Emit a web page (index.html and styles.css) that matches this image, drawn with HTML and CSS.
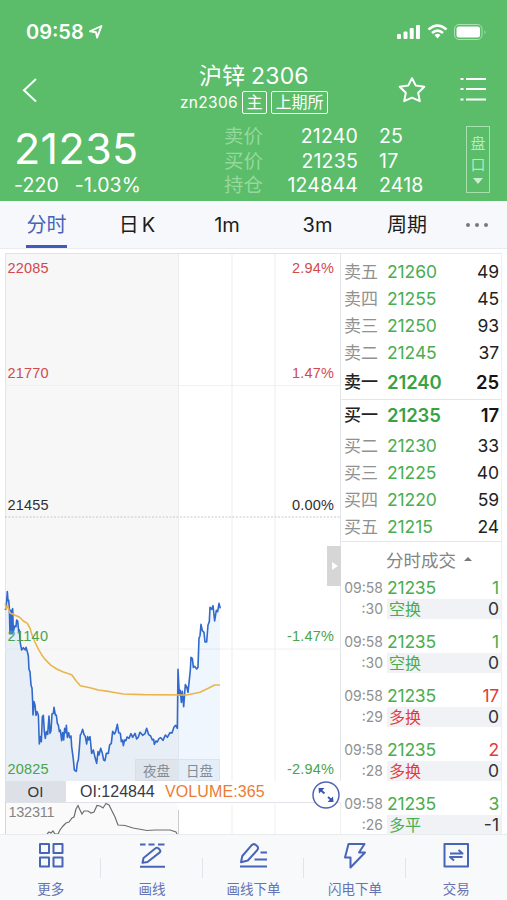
FILE: index.html
```html
<!DOCTYPE html>
<html lang="zh-CN">
<head>
    <meta charset="UTF-8">
    <meta name="viewport" content="width=device-width, initial-scale=1.0">
    <title>沪锌2306</title>
    <link rel="stylesheet" href="styles.css">
</head>
<body>
    <header class="quote-header">
        <div class="status-bar">
            <span class="clock">09:58</span>
            <svg class="location" width="14" height="14" viewBox="0 0 14 14"><path d="M1 6.400 12.400 1 8.100 12.600 7 7.200z" fill="none" stroke="#fff" stroke-width="1.900" stroke-linejoin="round"/></svg>
            <svg class="phone-icons" width="92" height="18" viewBox="0 0 92 18">
                <g fill="#fff">
                    <rect x="1" y="11" width="4" height="5" rx="1"/>
                    <rect x="7.500" y="8.500" width="4" height="7.500" rx="1"/>
                    <rect x="13.700" y="5" width="4" height="11" rx="1"/>
                    <rect x="20" y="2" width="4" height="14" rx="1"/>
                    <path d="M38.500 12 41.500 15.600 44.500 12Q41.500 9.700 38.500 12z"/>
                    <rect x="60.500" y="3.500" width="23.500" height="11" rx="2.500"/>
                    <path d="M88.500 7v4.500q2-2.200 0-4.500z" opacity=".5"/>
                </g>
                <path d="M32.500 6.400Q41.500-1.400 50.500 6.400M36 10Q41.500 5.200 47 10" fill="none" stroke="#fff" stroke-width="2.600"/>
                <rect x="58.500" y="1.500" width="27.500" height="15" rx="4.500" fill="none" stroke="#fff" opacity=".5"/>
            </svg>
        </div>

        <div class="title-bar">
            <svg class="back" width="16" height="26" viewBox="0 0 16 26"><path d="M14 2 2 13.200 14 24.500" fill="none" stroke="#fff" stroke-width="2"/></svg>
            <div class="contract">
                <div class="contract-name">沪锌<span>2306</span></div>
                <div class="contract-code"><span>zn2306</span><b class="tag">主</b><b class="tag">上期所</b></div>
            </div>
            <svg class="star" width="30" height="28" viewBox="0 0 30 28"><path d="M15 2.200 18.800 9.600 27.300 10.800 21.200 16.800 22.800 25.200 15 21.700 7.200 25.200 8.800 16.800 2.700 10.800 11.200 9.600z" fill="none" stroke="#fff" stroke-width="2" stroke-linejoin="round"/></svg>
            <svg class="list" width="28" height="26" viewBox="0 0 28 26"><path d="M7 3h20M7 13h20M7 23.500h20M1.500 3h3M1.500 13h3M1.500 23.500h3" stroke="#fff" stroke-width="2"/></svg>
        </div>

        <div class="quote">
            <div class="last">
                <div class="last-price">21235</div>
                <div class="change"><span>-220</span><span>-1.03%</span></div>
            </div>
            <div class="quote-table">
                <label>卖价</label><span>21240</span><em>25</em>
                <label>买价</label><span>21235</span><em>17</em>
                <label>持仓</label><span>124844</span><em>2418</em>
            </div>
            <div class="depth-button"><span>盘</span><span>口</span><i></i></div>
        </div>
    </header>

    <nav class="tabs">
        <a class="active">分时</a>
        <a>日<span class="k">K</span></a>
        <a>1m</a>
        <a>3m</a>
        <a>周期</a>
        <a class="dots"><i></i><i></i><i></i></a>
    </nav>

    <main class="content">
        <section class="chart-column">
            <svg class="chart" width="341" height="528" viewBox="0 253 341 528">
                <rect x="5" y="253" width="173" height="528" fill="#f7f7f7"/>
                <g stroke="#ededf0">
                    <path d="M5.500 253v528M340.500 253v528" stroke="#e2e6ea"/>
                    <path d="M178.500 253v528M232 253v528M275 253v528"/>
                    <path d="M5 253.500h336" stroke="#dfe3e8"/>
                    <path d="M5 385.500h336M5 649h336" stroke="#f0f0f2"/>
                    <path d="M5 517h336" stroke="#c8c8c8" stroke-dasharray="2 1.500"/>
                </g>
                <g class="axis">
                    <text x="7.500" y="273" textLength="41" class="up">22085</text>
                    <text x="7.500" y="378" textLength="41" class="up">21770</text>
                    <text x="7.500" y="510" textLength="41">21455</text>
                    <text x="292" y="273" textLength="42" class="up">2.94%</text>
                    <text x="292" y="378" textLength="42" class="up">1.47%</text>
                    <text x="292" y="510" textLength="42">0.00%</text>
                    <text x="287" y="641" textLength="47" class="down">-1.47%</text>
                    <text x="287" y="774" textLength="47" class="down">-2.94%</text>
                </g>
                <!-- price and average lines -->
                <g transform="translate(0 570) scale(.33333)" fill="none" stroke-linejoin="round">
                    <path fill="#2f86e8" fill-opacity=".08" d="M16 120 22 65 30 185 38 190 50 150 65 240 82 245 93 340 100 430 104 400 118 522 128 440 137 505 148 480 162 412 172 460 185 512 198 470 213 515 227 604 248 478 262 510 290 580 302 535 315 572 335 490 352 463 370 527 405 490 440 475 465 523 532 465 535 300 545 410 560 365 573 262 590 295 603 163 618 215 630 110 645 150 660 100V633H16z"/>
                    <path stroke="#3169cc" stroke-width="4.800" d="M16 120 19 105 22 65 24 92 26 90 28 115 30 192 33 120 36 192 38 116 40 185 44 168 48 170 50 150 53 153 56 185 58 180 61 220 65 240 70 233 76 240 78 232 82 245 85 258 87 298 90 305 93 345 96 355 98 395 99 435 102 395 105 405 108 436 111 425 115 435 118 522 121 500 124 515 127 440 130 436 133 485 136 505 139 485 143 493 147 438 150 490 153 482 156 432 160 430 162 412 166 435 169 435 172 460 175 465 178 485 181 480 185 512 188 488 191 510 194 475 198 488 199 466 202 502 206 488 209 503 213 498 215 530 220 568 223 600 229 604 232 578 235 570 238 535 241 495 244 490 248 478 252 493 256 500 260 522 263 500 266 510 270 500 275 550 280 540 285 562 290 580 294 545 297 555 302 535 307 550 311 570 315 572 319 550 325 550 329 525 334 520 338 484 343 492 347 485 352 463 356 488 361 490 364 515 368 510 370 527 374 510 378 512 381 501 387 505 393 491 398 502 405 490 410 507 415 501 420 487 428 496 435 491 440 475 446 494 452 498 457 510 461 508 463 523 468 513 472 516 477 506 482 503 489 511 496 495 502 502 510 488 516 489 522 471 527 466 532 475 534 298 538 375 541 361 544 397 547 364 551 410 556 344 560 350 564 367 568 330 571 300 573 262 577 265 580 292 584 289 590 297 594 292 597 205 600 197 603 163 607 182 612 187 615 216 620 216 624 165 628 155 630 112 635 118 639 107 644 153 649 121 653 125 657 100 661 115"/>
                    <path stroke="#eab54d" stroke-width="4.800" d="M16 100 18 116 23 108 30 129 45 136 58 141 70 153 82 160 90 175 97 198 106 219 116 239 125 254 136 269 153 286 170 297 190 306 215 314 228 332 241 347 270 353 295 360 330 365 370 372 430 374 560 375 600 367 625 355 644 345 660 345"/>
                </g>
                <g class="axis down">
                    <text x="7.500" y="641" textLength="40.500">21140</text>
                    <text x="7.500" y="774" textLength="41">20825</text>
                </g>
                <path d="M135.500 759.500h43v21h-43z" fill="#dfe5eb" stroke="#d7dee5"/>
                <path d="M178.500 759.500h41v21h-41z" fill="#e4eef8" stroke="#d9e4ef"/>
                <text x="143" y="775.500" class="session">夜盘</text>
                <text x="186" y="775.500" class="session">日盘</text>
            </svg>

            <div class="indicator">
                <span class="indicator-name">OI</span>
                <span class="oi">OI:124844</span>
                <span class="volume">VOLUME:365</span>
            </div>

            <svg class="chart" width="341" height="32" viewBox="0 802 341 32">
                <path d="M5 802h173v32H5z" fill="#fafafa"/>
                <path d="M5 802.500h336" stroke="#dfe3e8"/>
                <path d="M5.500 802v32" stroke="#cddbd3"/>
                <path d="M232 802v32M275 802v32M340.500 802v32" stroke="#efeff2"/>
                <path d="M178.500 810v24" stroke="#ccc"/>
                <text x="8.500" y="817" textLength="46" class="oi-max">132311</text>
                <path d="M47 834 49 832 51 833 53 831 55 834 58 834 60 830 63 826 66 823 69 822 72 818 74 817 76 809 78 805.500 80 810 82 814 84 811 88 811 91 813 94 812 97 805.500 100 806 103 808 106 803.500 109 805 112 811 115 817 118 825 125 825.500 133 828 147 830.500 155 830 170 830 176 832 177 834" fill="none" stroke="#6e6e6e" stroke-width="1.200"/>
            </svg>

            <div class="panel-handle"></div>
            <svg class="expand" width="28" height="28" viewBox="0 0 28 28">
                <circle cx="14" cy="14" r="13" fill="#fff" stroke="#5065b5" stroke-width="1.500"/>
                <path d="M12.500 12.500 8 8.500M16 16 20 19.500" fill="none" stroke="#3655b4" stroke-width="1.800"/>
                <path d="M6.500 7H12.500L7 12.500zM21.500 21H15.500L21 15.500z" fill="#3655b4"/>
            </svg>
        </section>

        <section class="side-panel">
            <div class="order-book asks">
                <div class="level"><label>卖五</label><span>21260</span><em>49</em></div>
                <div class="level"><label>卖四</label><span>21255</span><em>45</em></div>
                <div class="level"><label>卖三</label><span>21250</span><em>93</em></div>
                <div class="level"><label>卖二</label><span>21245</span><em>37</em></div>
                <div class="level best"><label>卖一</label><span>21240</span><em>25</em></div>
            </div>
            <div class="order-book bids">
                <div class="level best"><label>买一</label><span>21235</span><em>17</em></div>
                <div class="level"><label>买二</label><span>21230</span><em>33</em></div>
                <div class="level"><label>买三</label><span>21225</span><em>40</em></div>
                <div class="level"><label>买四</label><span>21220</span><em>59</em></div>
                <div class="level"><label>买五</label><span>21215</span><em>24</em></div>
            </div>
            <div class="trades-title">分时成交<i></i></div>
            <div class="trade">
                <time>09:58</time><div class="row green"><span>21235</span><em>1</em></div>
                <time>:30</time><div class="row kind green"><span>空换</span><em>0</em></div>
            </div>
            <div class="trade">
                <time>09:58</time><div class="row green"><span>21235</span><em>1</em></div>
                <time>:30</time><div class="row kind green"><span>空换</span><em>0</em></div>
            </div>
            <div class="trade">
                <time>09:58</time><div class="row green"><span>21235</span><em class="red">17</em></div>
                <time>:29</time><div class="row kind red"><span>多换</span><em>0</em></div>
            </div>
            <div class="trade">
                <time>09:58</time><div class="row green"><span>21235</span><em class="red">2</em></div>
                <time>:28</time><div class="row kind red"><span>多换</span><em>0</em></div>
            </div>
            <div class="trade">
                <time>09:58</time><div class="row green"><span>21235</span><em>3</em></div>
                <time>:26</time><div class="row kind green"><span>多平</span><em>-1</em></div>
            </div>
        </section>
    </main>

    <footer class="toolbar">
        <a>
            <svg width="28" height="28" viewBox="0 0 28 28"><path d="M3 2h9v9H3zM16.500 2h9v9h-9zM3 15.500h9v9H3zM16.500 15.500h9v9h-9z"/></svg>
            更多
        </a>
        <a>
            <svg width="28" height="28" viewBox="0 0 28 28"><path d="M2 2.500h5.500M10.500 2.500h6M20 2.500h6.500M2 24.800h25M4.500 20.800 5.500 16 17.500 6.300Q19 5.200 20.300 6.300L21.800 7.800Q23 9.200 21.500 10.600L9.500 20z"/></svg>
            画线
        </a>
        <a>
            <svg width="28" height="28" viewBox="0 0 28 28"><path d="M1 24.500h27M15.500 17.500H28M21.500 10.500H28M2 20.300 3.300 14 12.500 3.300Q14.500 1.300 16.500 2.700L18 4Q20 5.800 18.300 8L8.800 18.500z"/></svg>
            画线下单
        </a>
        <a>
            <svg width="28" height="28" viewBox="0 0 28 28"><path d="M7.500 2H23.500L18 10.500H24L9.500 25.500V15.500H4z"/></svg>
            闪电下单
        </a>
        <a>
            <svg width="28" height="28" viewBox="0 0 28 28"><path d="M2.500 2h23.500v22.500H2.500zM8 11.500H20.500L16.500 8M20.500 15H8L12 18.500"/></svg>
            交易
        </a>
    </footer>
</body>
</html>
```

FILE: styles.css
```css
* {
    box-sizing: border-box;
}
body {
    margin: 0;
    width: 507px;
    height: 900px;
    overflow: hidden;
    background: #fff;
    font-family: Inter, "Noto Sans CJK SC", sans-serif;
    color: #222;
}
em, i {
    font-style: normal;
}
svg {
    display: block;
    flex: none;
}
.quote-header {
    height: 201px;
    background: #5bbc6a;
    color: #fff;
}
.status-bar {
    height: 64px;
    padding: 22px 19px 0 26px;
    display: flex;
    align-items: flex-start;
}
.clock {
    font-size: 20px;
    line-height: 21px;
    font-weight: 600;
    letter-spacing: 0;
}
.location {
    margin: 3px 0 0 5px;
}
.phone-icons {
    margin: 1px 0 0 auto;
}
.title-bar {
    height: 60px;
    display: flex;
    align-items: flex-start;
    padding: 0 20px 0 22px;
}
.back {
    margin-top: 13px;
}
.contract {
    width: 170px;
    margin-left: 142px;
}
.contract-name {
    font-size: 23px;
    line-height: 24px;
    padding-left: 19px;
    white-space: nowrap;
}
.contract-name span {
    margin-left: 6px;
    letter-spacing: 0.2px;
}
.contract-code {
    display: flex;
    align-items: center;
    margin-top: 3px;
    height: 23px;
    font-size: 15.5px;
    white-space: nowrap;
}
.contract-code > span {
    width: 58px;
    margin-right: 4px;
    letter-spacing: 0.3px;
}
.tag {
    height: 23px;
    line-height: 20px;
    margin-right: 4px;
    padding: 0 3.5px;
    border: 1px solid #fff;
    border-radius: 2px;
    font-weight: 400;
    font-size: 16px;
}
.star {
    margin: 12px 0 0 47px;
}
.list {
    margin: 12px 0 0 auto;
}
.quote {
    display: flex;
    height: 76px;
}
.last {
    width: 224px;
    padding: 2px 0 0 14px;
}
.last-price {
    font-size: 43px;
    line-height: 44px;
    letter-spacing: 0.4px;
}
.change {
    display: flex;
    gap: 16px;
    margin-top: 3px;
    font-size: 19.5px;
    line-height: 24px;
    letter-spacing: 0.1px;
}
.quote-table {
    display: grid;
    grid-template-columns: 40px 94px 60px;
    grid-auto-rows: 24.5px;
    column-gap: 0;
    font-size: 19.5px;
    line-height: 24px;
    letter-spacing: 0.2px;
}
.quote-table label {
    color: #94da9d;
    letter-spacing: 0;
}
.quote-table span {
    text-align: right;
}
.quote-table em {
    padding-left: 21px;
}
.depth-button {
    width: 24px;
    height: 67px;
    margin: 2px 0 0 48px;
    padding-top: 6px;
    border: 1px solid #a5e0ad;
    color: #b9e8bf;
    display: flex;
    flex-direction: column;
    align-items: center;
    font-size: 15px;
    line-height: 21px;
}
.depth-button i {
    margin-top: 3px;
    border: 5px solid transparent;
    border-top: 6px solid #c8eecd;
}
.tabs {
    height: 48px;
    display: grid;
    grid-template-columns: 92px 90px 90px 91px 88px 52px;
    background: #f7f8fb;
    border-bottom: 1px solid #e9ebee;
    font-size: 20px;
    color: #1c1d20;
}
.tabs a {
    display: flex;
    justify-content: center;
    height: 47px;
    line-height: 49px;
}
.tabs .k {
    margin-left: 3px;
}
.tabs .active {
    width: 41px;
    margin-left: 26px;
    color: #4663b9;
    border-bottom: 3px solid #3f5db7;
}
.tabs .dots {
    align-items: center;
    gap: 5px;
    padding-bottom: 0;
}
.dots i {
    width: 4px;
    height: 4px;
    border-radius: 50%;
    background: #77797f;
}
.content {
    display: flex;
    height: 585px;
    padding-top: 4px;
    overflow: hidden;
}
.chart-column {
    position: relative;
    width: 341px;
}
.chart {
    font-family: "Liberation Sans", "Noto Sans CJK SC", sans-serif;
}
.axis text {
    font-size: 14.5px;
    fill: #303030;
}
.axis .up {
    fill: #d14a4d;
}
.axis .down, .axis.down text {
    fill: #4aa34e;
}
.session {
    font-size: 13.5px;
    fill: #858b94;
}
.oi-max {
    font-size: 14.5px;
    fill: #858585;
}
.indicator {
    height: 21px;
    display: flex;
    padding-left: 5px;
    font: 16px/21px "Liberation Sans", sans-serif;
}
.indicator-name {
    width: 61px;
    text-align: center;
    background: #dee0e8;
    color: #34353c;
    font-size: 15px;
}
.oi {
    width: 85px;
    margin-left: 14px;
    color: #393948;
}
.volume {
    color: #ec7c34;
    letter-spacing: 0.1px;
}
.panel-handle {
    position: absolute;
    left: 327px;
    top: 293px;
    width: 14px;
    height: 40px;
    background: #d6d6d6;
}
.panel-handle::after {
    content: "";
    position: absolute;
    left: 5px;
    top: 16px;
    border: 4px solid transparent;
    border-left: 6px solid #fff;
}
.expand {
    position: absolute;
    left: 312px;
    top: 528px;
}
.side-panel {
    width: 161px;
    border-top: 1px solid #e6e9ed;
    border-right: 1px solid #eceff2;
}
.order-book {
    border-bottom: 1px solid #e4e7ea;
}
.asks {
    height: 146px;
    padding-top: 4px;
}
.bids {
    height: 142px;
}
.bids .level {
    position: relative;
    top: -1px;
}
.level {
    display: grid;
    grid-template-columns: 43px 70px 1fr;
    height: 27px;
    line-height: 28px;
    padding: 0 2px 0 3px;
    font-size: 17.5px;
    letter-spacing: -0.1px;
}
.level label {
    color: #919191;
    font-size: 17px;
    letter-spacing: 0;
}
.level span {
    color: #4aad51;
    padding-left: 0;
}
.level em {
    text-align: right;
}
.level.best {
    height: 33px;
    line-height: 33px;
    font-weight: 600;
    font-size: 18.5px;
    color: #151515;
}
.level.best label {
    font-weight: 500;
    color: #222;
}
.level.best span {
    color: #39a243;
}
.trades-title {
    height: 34px;
    padding-left: 45px;
    display: flex;
    align-items: center;
    font-size: 17.5px;
    color: #858585;
}
.trades-title i {
    margin: -5px 0 0 8px;
    border: 4px solid transparent;
    border-bottom: 4px solid #777;
}
.trade {
    display: grid;
    grid-template-columns: 41px 1fr;
    grid-template-rows: 23px 20px;
    column-gap: 4px;
    height: 54px;
    line-height: 24px;
    padding-left: 1px;
}
.trade time {
    text-align: right;
    font-size: 14px;
    color: #909090;
}
.row {
    display: flex;
    justify-content: space-between;
    padding-right: 2px;
    font-size: 17.5px;
    letter-spacing: -0.2px;
}
.row.kind {
    line-height: 20px;
    padding-left: 2px;
    background: #f1f2f5;
    font-size: 16px;
    letter-spacing: 0;
}
.trade time:nth-of-type(2) {
    line-height: 20px;
}
.kind em {
    color: #333;
    font-size: 17.5px;
}
.green {
    color: #4aad51;
}
.red {
    color: #e13c39;
}
.toolbar {
    height: 66px;
    display: grid;
    grid-template-columns: repeat(5, 1fr);
    background: #f7f9fb;
    border-top: 1px solid #e9ecee;
    padding-top: 7px;
}
.toolbar a {
    display: flex;
    flex-direction: column;
    align-items: center;
    gap: 9px;
    font-size: 13.5px;
    line-height: 20px;
    color: #6474b4;
    background: linear-gradient(#e0e3e8, #e0e3e8) right 16px / 1px 20px no-repeat;
}
.toolbar a:last-child {
    background: none;
}
.toolbar path {
    fill: none;
    stroke: #4965b7;
    stroke-width: 2;
    stroke-linejoin: round;
}
```
